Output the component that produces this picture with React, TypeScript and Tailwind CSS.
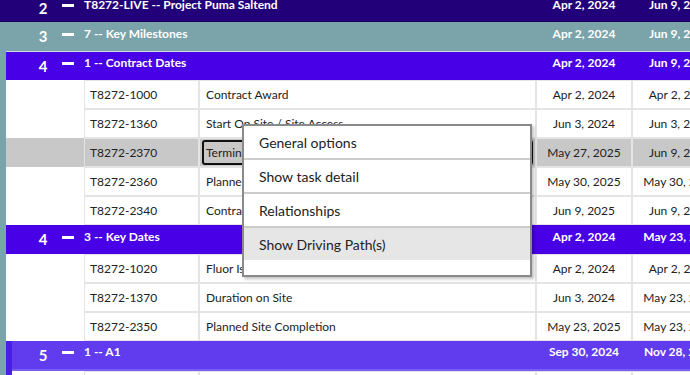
import React from "react";

interface Task {
  id: string;
  name: string;
  start: string;
  finish: string;
  selected?: boolean;
}

interface GroupHeaderProps {
  level: number;
  title: string;
  start: string;
  finish: string;
  className: string;
  padLeft: string;
}

const contractDates: Task[] = [
  { id: "T8272-1000", name: "Contract Award", start: "Apr 2, 2024", finish: "Apr 2, 2024" },
  { id: "T8272-1360", name: "Start On Site / Site Access", start: "Jun 3, 2024", finish: "Jun 3, 2024" },
  { id: "T8272-2370", name: "Terminal Handover", start: "May 27, 2025", finish: "Jun 9, 2025", selected: true },
  { id: "T8272-2360", name: "Planned Mechanical Completion", start: "May 30, 2025", finish: "May 30, 2025" },
  { id: "T8272-2340", name: "Contract Completion", start: "Jun 9, 2025", finish: "Jun 9, 2025" },
];

const keyDates: Task[] = [
  { id: "T8272-1020", name: "Fluor Issue Notice to Proceed", start: "Apr 2, 2024", finish: "Apr 2, 2024" },
  { id: "T8272-1370", name: "Duration on Site", start: "Jun 3, 2024", finish: "May 23, 2025" },
  { id: "T8272-2350", name: "Planned Site Completion", start: "May 23, 2025", finish: "May 23, 2025" },
];

const a1Tasks: Task[] = [
  { id: "T8272-1110", name: "Engineering Package A1", start: "Sep 30, 2024", finish: "Nov 28, 2024" },
];

const GroupHeader = ({ level, title, start, finish, className, padLeft }: GroupHeaderProps) => (
  <div className={`flex items-center text-white ${className}`}>
    <div className={`flex flex-1 items-center ${padLeft}`}>
      <span className="w-[30px] text-center text-[15px] font-bold">{level}</span>
      <span className="mb-[5px] ml-[4px] h-[3px] w-[12px] bg-white" />
      <span className="mb-[6px] ml-[10px] whitespace-nowrap text-[12px] font-bold">{title}</span>
    </div>
    <div className="mb-[6px] w-[96px] text-center text-[12px] font-bold whitespace-nowrap">{start}</div>
    <div className="mb-[6px] w-[96px] text-center text-[12px] font-bold whitespace-nowrap">{finish}</div>
  </div>
);

const TaskRow = ({ task }: { task: Task }) => {
  const bg = task.selected ? "bg-[#c8c8c8]" : "bg-white";
  const cell = "flex h-[29px] items-center border border-[#e4e4e4] text-[12px] text-[#222] whitespace-nowrap overflow-hidden";
  return (
    <div className={`flex ${bg}`}>
      <div className="flex-1" />
      <div className={`${cell} w-[115px] pl-[5px]`}>{task.id}</div>
      <div className={`${cell} w-[337px] px-[2px]`}>
        {task.selected ? (
          <div className="flex h-[25px] w-full items-center rounded-[3px] border-2 border-[#111] pl-[2px]">
            {task.name}
          </div>
        ) : (
          <span className="pl-[4px]">{task.name}</span>
        )}
      </div>
      <div className={`${cell} w-[96px] justify-center`}>{task.start}</div>
      <div className={`${cell} w-[96px] justify-center`}>{task.finish}</div>
    </div>
  );
};

const menuItems = ["General options", "Show task detail", "Relationships", "Show Driving Path(s)"];

export default function App() {
  return (
    <div className="relative h-[375px] w-[690px] overflow-hidden bg-white font-['Lato',sans-serif]">
      <div className="-mt-[5px] w-[728px]">
        <GroupHeader
          level={2}
          title="T8272-LIVE -- Project Puma Saltend"
          start="Apr 2, 2024"
          finish="Jun 9, 2025"
          className="h-[27px] bg-[#22007a] border-b border-[#16005a]"
          padLeft="pl-[28px]"
        />

        {/* level 3 container */}
        <div className="bg-[#7aa3aa] pl-[6px]">
          <div className="-ml-[6px]">
            <GroupHeader
              level={3}
              title="7 -- Key Milestones"
              start="Apr 2, 2024"
              finish="Jun 9, 2025"
              className="h-[29px] bg-[#7aa3aa]"
              padLeft="pl-[28px]"
            />
          </div>

          <div className="border-t border-[#cddcde]">
            <GroupHeader
              level={4}
              title="1 -- Contract Dates"
              start="Apr 2, 2024"
              finish="Jun 9, 2025"
              className="h-[28px] bg-[#4800e6]"
              padLeft="pl-[22px]"
            />
            {contractDates.map((t) => (
              <TaskRow key={t.id} task={t} />
            ))}
          </div>

          <div>
            <GroupHeader
              level={4}
              title="3 -- Key Dates"
              start="Apr 2, 2024"
              finish="May 23, 2025"
              className="h-[29px] bg-[#4800e6]"
              padLeft="pl-[22px]"
            />
            {keyDates.map((t) => (
              <TaskRow key={t.id} task={t} />
            ))}
            <div className="bg-white">
              <div className="border-l-[6px] border-[#4a1ee6]">
                <GroupHeader
                  level={5}
                  title="1 -- A1"
                  start="Sep 30, 2024"
                  finish="Nov 28, 2024"
                  className="h-[30px] bg-[#613bee] border-b-2 border-[#7a5cf2]"
                  padLeft="pl-[16px]"
                />
                {a1Tasks.map((t) => (
                  <TaskRow key={t.id} task={t} />
                ))}
              </div>
            </div>
          </div>
        </div>
      </div>

      {/* context menu */}
      <div className="absolute left-[242px] top-[124px] flex h-[153px] w-[290px] flex-col border-2 border-[#8a8a8a] bg-white shadow-[2px_2px_3px_rgba(0,0,0,0.25)]">
        {menuItems.map((item, i) => (
          <div
            key={item}
            className={`flex items-center pl-[15px] text-[14px] text-[#222] ${
              i < menuItems.length - 1 ? "h-[34px] border-b-2 border-[#cccccc]" : "h-[32px] bg-[#e6e6e6]"
            }`}
          >
            {item}
          </div>
        ))}
      </div>
    </div>
  );
}
